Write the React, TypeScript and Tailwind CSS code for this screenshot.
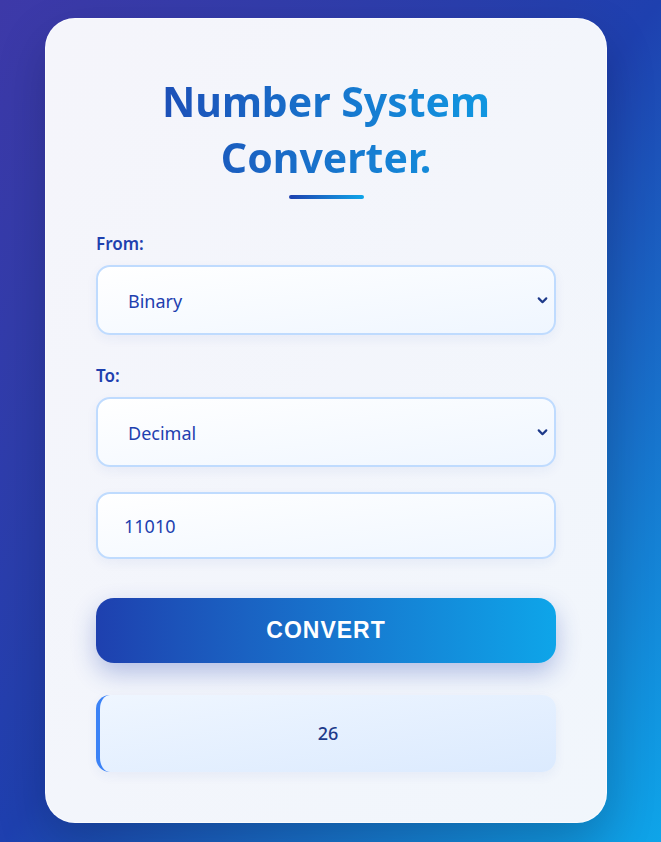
import { useState } from "react";

function Chevron() {
  return (
    <svg
      className="pointer-events-none absolute right-[7px] top-1/2 -translate-y-1/2"
      width="13"
      height="13"
      viewBox="0 0 12 12"
      fill="none"
    >
      <path d="M2.5 4.5 6 8l3.5-3.5" stroke="#1e3a8a" strokeWidth="2" strokeLinecap="round" strokeLinejoin="round" />
    </svg>
  );
}

function Field({ label, value, options }: { label: string; value: string; options: string[] }) {
  return (
    <div className="flex flex-col">
      <label className="text-[17px] leading-6 font-semibold text-[#1e40af]">{label}</label>
      <div className="relative mt-[9px]">
        <select
          defaultValue={value}
          className="h-[70px] w-full appearance-none rounded-[14px] border-2 border-[#bfdbfe] bg-gradient-to-br from-white to-[#eff6ff] pt-[3px] pl-[30px] text-[18px] text-[#1e40af] shadow-[0_4px_12px_rgba(30,64,175,0.06)] outline-none"
        >
          {options.map((o) => (
            <option key={o}>{o}</option>
          ))}
        </select>
        <Chevron />
      </div>
    </div>
  );
}

const bases = ["Binary", "Decimal", "Octal", "Hexadecimal"];

export default function App() {
  const [input, setInput] = useState("11010");

  return (
    <div className="flex min-h-[842px] w-full items-start justify-center bg-gradient-to-br from-[#3d39a8] via-[#1e40af] to-[#0ea5e9] pt-[18px] pr-[9px] font-['Noto_Sans',sans-serif]">
      <div className="flex h-[805px] w-[562px] flex-col rounded-[30px] border border-white/60 bg-gradient-to-br from-[#f5f5fb] to-[#f1f6fc] px-[50px] pt-[54px] shadow-[0_20px_50px_rgba(0,0,0,0.2)]">
        <h1 className="bg-gradient-to-r from-[#1e40af] to-[#0ea5e9] bg-clip-text text-center text-[41px] leading-[56px] font-bold text-transparent">
          Number System
          <br />
          Converter.
        </h1>
        <div className="mx-auto mt-[10px] h-[4px] w-[75px] rounded-full bg-gradient-to-r from-[#1e40af] to-[#0ea5e9]" />

        <div className="mt-[33px]">
          <Field label="From:" value="Binary" options={bases} />
        </div>
        <div className="mt-[29px]">
          <Field label="To:" value="Decimal" options={bases} />
        </div>

        <input
          value={input}
          onChange={(e) => setInput(e.target.value)}
          className="mt-[25px] h-[67px] w-full rounded-[14px] border-2 border-[#bfdbfe] bg-gradient-to-br from-white to-[#eff6ff] px-[26px] text-[18px] text-[#1e40af] shadow-[0_4px_12px_rgba(30,64,175,0.06)] outline-none"
        />

        <button className="mt-[39px] h-[65px] w-full rounded-[18px] bg-gradient-to-r from-[#1e40af] to-[#0ea5e9] font-['Liberation_Sans',sans-serif] text-[23px] font-bold tracking-[1px] text-white shadow-[0_10px_25px_rgba(30,64,175,0.3)]">
          CONVERT
        </button>

        <div className="mt-[32px] flex h-[77px] items-center justify-center rounded-[14px] border-l-4 border-[#3b82f6] bg-gradient-to-br from-[#eff6ff] to-[#dbeafe] text-[18px] font-medium text-[#1e3a8a] shadow-[0_4px_12px_rgba(30,64,175,0.06)]">
          26
        </div>
      </div>
    </div>
  );
}
